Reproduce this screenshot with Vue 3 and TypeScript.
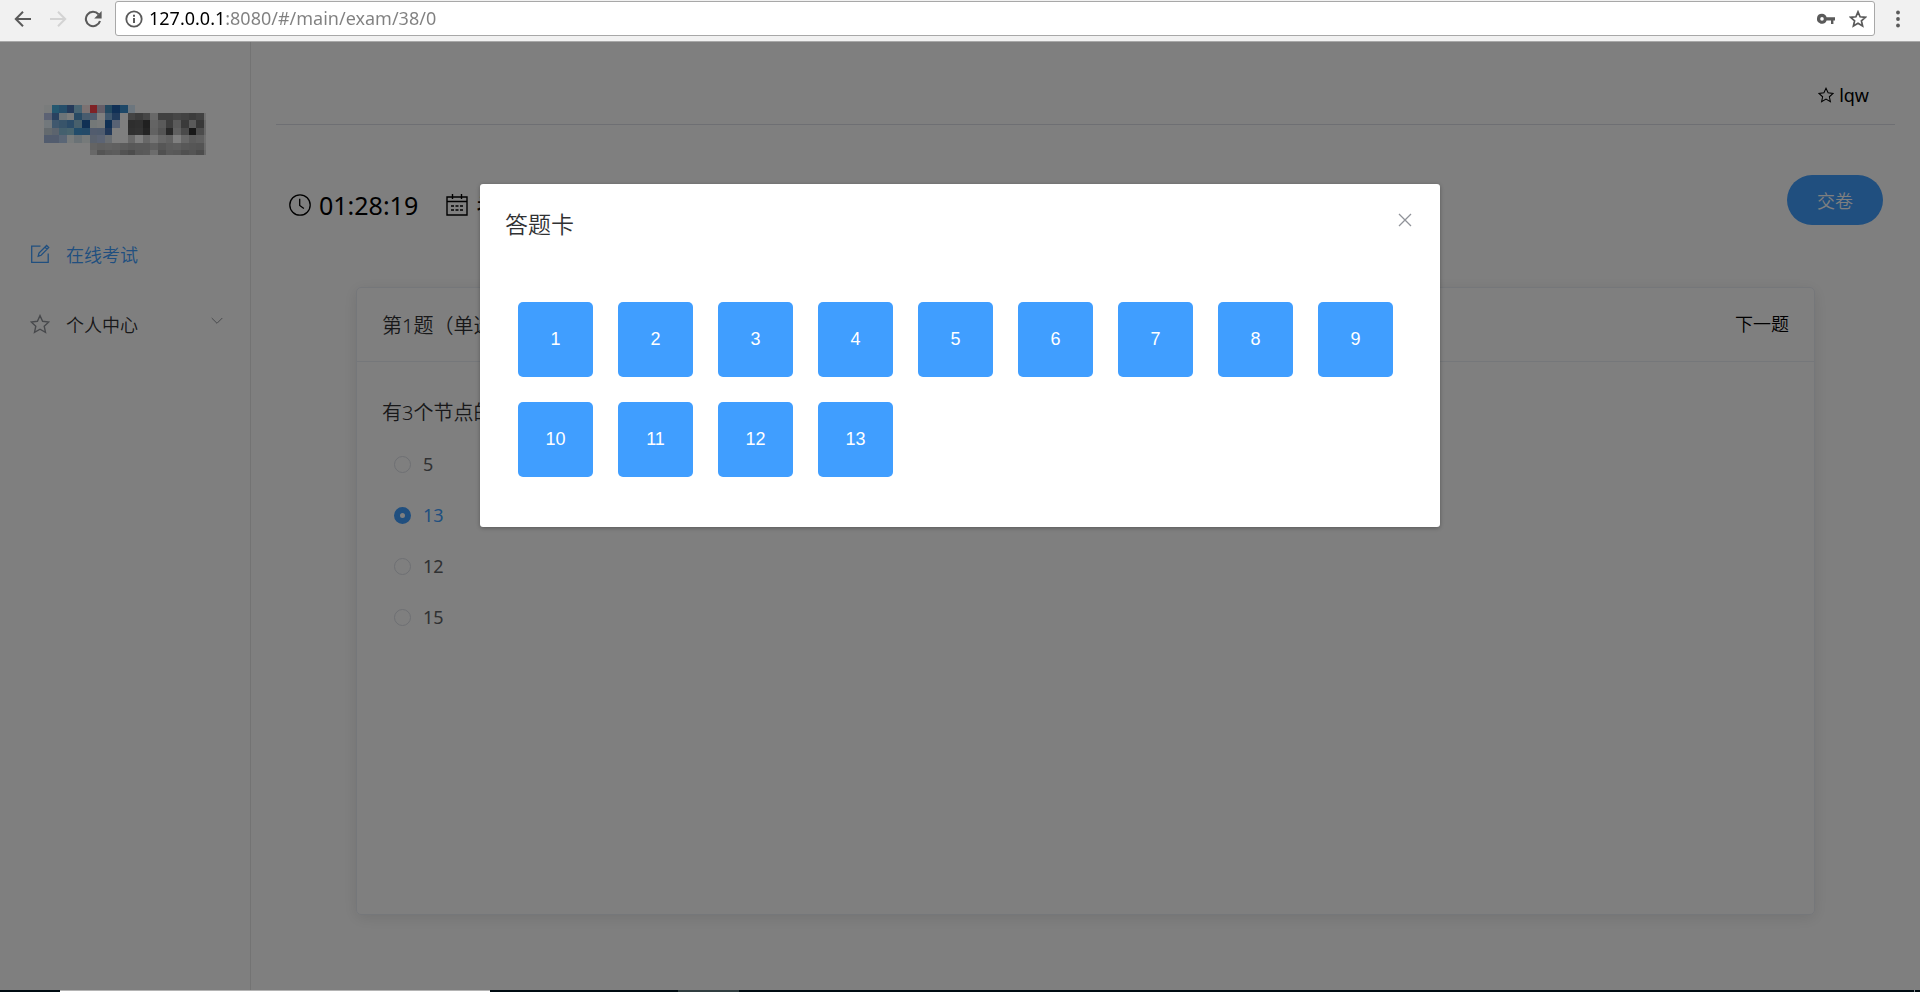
<script setup lang="ts">
import { ref } from 'vue'

const address = ref('127.0.0.1:8080/#/main/exam/38/0')
const options: string[] = ['5', '13', '12', '15']
const selected = ref('13')
const cardCount = 13
const open = ref(true)

// Logo mosaic: one list of cells per row, "-" leaves a cell empty
const mosaic: string[] = [
  'f4f8f8 4ab0e0 4a9cd4 4874b4 90c8e4 f8e4e4 ff444c c8bcd0 4690c0 2060ac 3c90d0 d8ecfc',
  'b8c4e8 5484c0 d8e8f0 f4f8f8 5094c8 90b8dc a0b8dc - 80b0dc 4478b8 - 888888 787878 8c8c8c d0d0d0 808080 808080 8c8c8c 848484 787878 848484 e0e0e0',
  'e4f0f8 80b0dc 70a8d4 5898d0 90c0d8 2060a8 e8f0f0 f0f4f4 2060a8 b0c4e8 - 5c5c5c 606060 404040 c8c8c8 b4b4b4 7c7c7c b4b4b4 747474 b4b4b4 707070 d0d0d0',
  'c8d4dc b8c8dc 88c0dc 90c8dc 4498d4 4894d0 a4b8dc a0b8dc 4470b0 - - 606060 646464 484848 c4c4c4 a8a8a8 505050 c0c0c0 949494 303030 989898 d0d0d0',
  'a4b8dc a4b8dc b4ccec f0f8f8 d4e4ec ecf4f4 b4c4dc b8c8e8 d4dce4 - - d0d0d0 - d0d0d0 ececec d0d0d0 c4c4c4 - d0d0d0 b8b8b8 c0c0c0 e0e0e0',
  '- - - - - - c8c8c8 c0c0c0 c4c4c4 c0c0c0 b8b8b8 b0b0b0 b4b4b4 b4b4b4 c0c0c0 acacac b8b8b8 bcbcbc b0b0b0 acacac a8a8a8 d8d8d8',
  '- - - - - - d0d0d0 a8a8a8 b4b4b4 b8b8b8 a4a4a4 989898 b0b0b0 b4b4b4 d8d8d8 a0a0a0 b4b4b4 b0b0b0 a0a0a0 a8a8a8 989898 d0d0d0',
]
interface Cell { x: number; y: number; c: string }
const cells: Cell[] = mosaic.flatMap((row, y) =>
  row.split(' ').map((c, x) => ({ x, y, c })).filter((cell) => cell.c !== '-'),
)
</script>

<template>
  <div class="window">
    <div class="browser">
      <button class="nav" aria-label="后退">
        <svg width="18" height="18" viewBox="0 0 18 18"><path d="M17 9H2.5M9 1.8 1.8 9 9 16.2" fill="none" stroke="#5a5a5a" stroke-width="2" /></svg>
      </button>
      <button class="nav" aria-label="前进" disabled>
        <svg width="18" height="18" viewBox="0 0 18 18"><path d="M1 9h14.5M9 1.8 16.2 9 9 16.2" fill="none" stroke="#d3d3d3" stroke-width="2" /></svg>
      </button>
      <button class="nav" aria-label="刷新">
        <svg width="18" height="18" viewBox="0 0 18 18"><path d="M14.5 4.2A7.2 7.2 0 1 0 16 11" fill="none" stroke="#5a5a5a" stroke-width="2.1" /><path d="M17.6 1v7.4h-7.4z" fill="#5a5a5a" /></svg>
      </button>
      <div class="address">
        <svg width="18" height="18" viewBox="0 0 18 18"><circle cx="9" cy="9" r="7.7" fill="none" stroke="#5a5a5a" stroke-width="1.8" /><path d="M8 8h2v5H8zM8 4.8h2v2H8z" fill="#5a5a5a" /></svg>
        <input v-model="address" class="url" type="text" aria-label="地址" spellcheck="false" />
        <button class="plain" aria-label="密码">
          <svg width="18" height="12" viewBox="0 0 18 12"><path d="M5 .8a5 5 0 1 0 4.6 6.8H14V11h2.4V7.6H18V4.2H9.6A5 5 0 0 0 5 .8zM5 4.1a1.8 1.8 0 1 1 0 3.6 1.8 1.8 0 0 1 0-3.6z" fill="#5a5a5a" fill-rule="evenodd" /></svg>
        </button>
        <button class="plain" aria-label="收藏">
          <svg width="18" height="18" viewBox="0 0 18 18"><path d="m9 1.8 2.1 5 5.3.5-4 3.5 1.2 5.3L9 13.3l-4.6 2.8 1.2-5.3-4-3.5 5.3-.5z" fill="none" stroke="#5a5a5a" stroke-width="1.7" /></svg>
        </button>
      </div>
      <button class="dots" aria-label="菜单">
        <svg width="4" height="18" viewBox="0 0 4 18"><circle cx="2" cy="2.5" r="1.9" fill="#5a5a5a" /><circle cx="2" cy="9" r="1.9" fill="#5a5a5a" /><circle cx="2" cy="15.5" r="1.9" fill="#5a5a5a" /></svg>
      </button>
    </div>

    <div class="page">
      <aside class="side">
        <svg class="logo" width="162" height="50" viewBox="0 0 21.3 6.6" preserveAspectRatio="none" shape-rendering="crispEdges" role="img" aria-label="标志">
          <rect v-for="cell in cells" :key="`${cell.x}-${cell.y}`" :x="cell.x" :y="cell.y" width="1" height="1" :fill="`#${cell.c}`" />
        </svg>
        <nav class="menu">
          <a class="item active" href="#/main/exam">
            <svg width="20" height="20" viewBox="0 0 20 20" fill="none" stroke="currentColor" stroke-width="1.3"><path d="M10.5 2.2H1.7v16.1h16.5V9.5" /><path d="m8.2 12.2.8-3.1 7.6-7.6 2.1 2.1-7.6 7.7zM15 3.1l2.1 2.1" /></svg>
            <span>在线考试</span>
          </a>
          <a class="item" href="#/main/user">
            <svg class="muted" width="20" height="20" viewBox="0 0 20 20" fill="none" stroke="currentColor" stroke-width="1.4"><path d="m10 1.6 2.6 5.7 6.2.7-4.6 4.2 1.3 6.1-5.5-3.1-5.5 3.1 1.3-6.1L1.2 8l6.2-.7z" /></svg>
            <span>个人中心</span>
            <svg class="muted arrow" width="12" height="12" viewBox="0 0 12 12" fill="none" stroke="currentColor"><path d="m.7 3 5.3 5.3L11.3 3" /></svg>
          </a>
        </nav>
      </aside>

      <main class="main">
        <header class="top">
          <svg width="16" height="16" viewBox="0 0 20 20" fill="none" stroke="#000" stroke-width="1.3"><path d="m10 1.6 2.6 5.7 6.2.7-4.6 4.2 1.3 6.1-5.5-3.1-5.5 3.1 1.3-6.1L1.2 8l6.2-.7z" /></svg>
          <span>lqw</span>
        </header>

        <div class="tools">
          <div class="status">
            <svg width="22" height="22" viewBox="0 0 22 22" fill="none" stroke="#000" stroke-width="1.3"><circle cx="11" cy="11" r="10.2" /><path d="M10.7 4.8v6.6l4.2 3.2" /></svg>
            <span class="timer">01:28:19</span>
            <svg class="date" width="22" height="22" viewBox="0 0 22 22" fill="none" stroke="#000" stroke-width="1.4"><path d="M1 3h20v18H1zM1 7.5h20M6.5 0v5M15.5 0v5" /><path d="M5 12h3M9.5 12h3M14 12h3M5 16h3M9.5 16h3M14 16h3" /></svg>
            <span class="timer">考</span>
          </div>
          <button class="submit">交卷</button>
        </div>

        <section class="card">
          <div class="card-head">
            <span>第1题（单选题）</span>
            <button class="next">下一题</button>
          </div>
          <fieldset class="card-body">
            <legend>有3个节点的</legend>
            <label v-for="o in options" :key="o" class="option" :class="{ on: selected === o }">
              <input v-model="selected" type="radio" name="answer" :value="o" />
              <span>{{ o }}</span>
            </label>
          </fieldset>
        </section>
      </main>

      <div v-if="open" class="overlay">
        <div class="dialog" role="dialog" aria-modal="true" aria-labelledby="dialog-title">
          <div class="dialog-head">
            <h2 id="dialog-title">答题卡</h2>
            <button class="close" aria-label="关闭" @click="open = false">
              <svg width="14" height="14" viewBox="0 0 14 14"><path d="m1 1 12 12M13 1 1 13" stroke="#909399" stroke-width="1.3" /></svg>
            </button>
          </div>
          <div class="numbers">
            <button v-for="n in cardCount" :key="n" class="num">{{ n }}</button>
          </div>
        </div>
      </div>
    </div>

    <div class="taskbar"><i class="task task-open"></i><i class="task task-idle"></i><i class="task task-edge"></i></div>
  </div>
</template>

<style>
body {
  margin: 0;
}
</style>

<style scoped>
* {
  box-sizing: border-box;
}
.window {
  display: flex;
  flex-direction: column;
  height: 100vh;
  overflow: hidden;
  font-family: "Noto Sans", "Noto Sans CJK SC", sans-serif;
  font-size: 18px;
  font-weight: 350;
  color: #000;
}
svg {
  display: block;
  flex: none;
}
button {
  padding: 0;
  border: 0;
  background: none;
  font: inherit;
  color: inherit;
}
.browser {
  display: flex;
  flex: none;
  align-items: center;
  height: 42px;
  padding: 0 20px 4px 14px;
  border-bottom: 1px solid #a8a8a8;
  background: #f1f1f1;
}
.nav {
  margin-right: 17px;
}
.nav:nth-child(3) {
  margin-right: 13px;
}
.address {
  display: flex;
  flex: 1;
  align-items: center;
  height: 35px;
  padding: 0 7px 0 9px;
  border: 1px solid #a8a8a8;
  border-radius: 3px;
  background: #fff;
}
.url {
  flex: 1;
  min-width: 0;
  margin-left: 6px;
  padding: 0 0 2px;
  border: 0;
  outline: 0;
  font: inherit;
  font-weight: 400;
  line-height: 24px;
  color: transparent;
  background: linear-gradient(to right, #000 74px, #808080 74px);
  background-clip: text;
}
.plain {
  margin-left: 14px;
}
.dots {
  margin-left: 21px;
}
.page {
  position: relative;
  display: flex;
  flex: 1;
  min-height: 0;
  background: #fff;
}
.side {
  flex: none;
  width: 251px;
  border-right: 1px solid #e6e6e6;
}
.logo {
  margin: 63px 0 64px 44px;
}
.item {
  display: flex;
  align-items: center;
  height: 70px;
  padding: 0 27px 0 30px;
  color: #303133;
  text-decoration: none;
}
.item span {
  margin-left: 16px;
}
.item.active {
  color: #409eff;
}
.muted {
  color: #909399;
}
.arrow {
  margin: 0 0 6px auto;
}
.main {
  display: flex;
  flex: 1;
  flex-direction: column;
  min-width: 0;
  padding: 25px 25px 75px;
}
.top {
  display: flex;
  flex: none;
  align-items: center;
  justify-content: flex-end;
  gap: 5px;
  height: 58px;
  padding: 0 26px 2px 0;
  border-bottom: 1px solid #dcdfe6;
}
.top span {
  font-weight: 400;
}
.tools {
  display: flex;
  flex: none;
  justify-content: space-between;
  margin: 50px 12px 62px;
}
.status {
  display: flex;
  align-items: center;
  padding: 10px 0 0 1px;
}
.timer {
  margin-left: 8px;
  font-size: 25px;
  font-weight: 400;
  line-height: 40px;
}
.date {
  margin-left: 28px;
}
.submit {
  height: 50px;
  padding: 0 30px;
  border-radius: 25px;
  background: #409eff;
  color: #fff;
}
.card {
  flex: 1;
  margin: 0 80px;
  border: 1px solid #ebeef5;
  border-radius: 5px;
  box-shadow: 0 3px 15px rgba(0, 0, 0, 0.1);
  color: #303133;
}
.card-head {
  display: flex;
  align-items: center;
  justify-content: space-between;
  height: 74px;
  padding: 0 25px;
  border-bottom: 1px solid #ebeef5;
  font-size: 20px;
}
.next {
  padding-bottom: 3px;
  font-size: 18px;
  color: #000;
}
.card-body {
  margin: 0;
  padding: 25px;
  border: 0;
}
.card-body legend {
  float: left;
  padding: 0;
  font-size: 20px;
  line-height: 52px;
}
.option {
  display: flex;
  clear: both;
  align-items: center;
  gap: 12px;
  height: 51px;
  padding-left: 12px;
  color: #606266;
}
.option span {
  padding-bottom: 2px;
  font-weight: 400;
}
.option.on {
  color: #409eff;
}
.option input {
  appearance: none;
  width: 17px;
  height: 17px;
  margin: 0;
  border: 1px solid #dcdfe6;
  border-radius: 50%;
  background: #fff;
}
.option input:checked {
  border: 6px solid #409eff;
}
.overlay {
  position: absolute;
  inset: 0;
  padding-top: 142px;
  background: rgba(0, 0, 0, 0.5);
}
.dialog {
  width: 50%;
  margin: 0 auto;
  border-radius: 3px;
  background: #fff;
  box-shadow: 0 1px 4px rgba(0, 0, 0, 0.3);
}
.dialog-head {
  display: flex;
  align-items: flex-start;
  justify-content: space-between;
  padding: 25px 28px 13px 25px;
}
.dialog-head h2 {
  margin: 0;
  font-size: 23px;
  font-weight: 350;
  line-height: 30px;
  color: #303133;
}
.close {
  margin-top: 4px;
}
.numbers {
  display: flex;
  flex-wrap: wrap;
  gap: 25px;
  padding: 50px 38px;
}
.num {
  width: 75px;
  height: 75px;
  border-radius: 5px;
  background: #409eff;
  font-family: "Liberation Sans", sans-serif;
  font-weight: 500;
  color: #fff;
}
.taskbar {
  display: flex;
  flex: none;
  height: 2px;
  background: #000c12;
}
.task-open {
  width: 430px;
  margin-left: 60px;
  border-top: 1px solid #b4b4b4;
  background: #fff;
}
.task-idle {
  width: 61px;
  margin-left: 188px;
  background: #303e40;
}
.task-edge {
  width: 1px;
  margin: 0 5px 0 auto;
  background: #8a9296;
}
</style>
